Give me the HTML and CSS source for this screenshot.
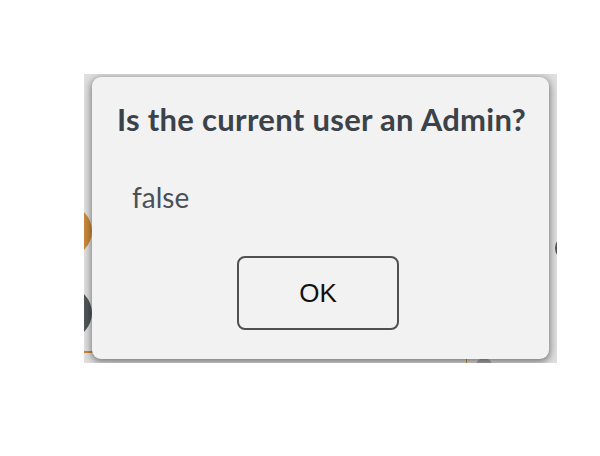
FILE: index.html
```html
<!DOCTYPE html>
<html>
<head>
<meta charset="utf-8">
<link rel="stylesheet" href="styles.css">
</head>
<body>
<div class="stage">
  <div class="backdrop">
    <span class="blob blob-orange"></span>
    <span class="blob blob-dark"></span>
    <span class="blob blob-right"></span>
    <span class="rule-orange"></span>
    <span class="stick"></span>
    <span class="blob blob-bottom"></span>
    <div class="dialog">
      <h1 class="title">Is the current user an Admin?</h1>
      <p class="message">false</p>
      <div class="actions">
        <button class="ok">OK</button>
      </div>
    </div>
  </div>
</div>
</body>
</html>
```

FILE: styles.css
```css
html, body {
  margin: 0;
  padding: 0;
  background: #ffffff;
}
.stage {
  width: 600px;
  height: 456px;
  padding: 74px 0 0 84px;
  box-sizing: border-box;
}
.backdrop {
  position: relative;
  width: 473px;
  height: 289px;
  background: #dedede;
  overflow: hidden;
  padding: 3px 0 0 8px;
  box-sizing: border-box;
}
.blob {
  position: absolute;
  border-radius: 50%;
}
.blob-orange {
  left: -40px;
  top: 132px;
  width: 48px;
  height: 50px;
  background: #c8883a;
}
.blob-dark {
  left: -40px;
  top: 214px;
  width: 48px;
  height: 50px;
  background: #4f5457;
}
.blob-right {
  left: 471px;
  top: 162px;
  width: 24px;
  height: 24px;
  background: #4f5457;
}
.rule-orange {
  position: absolute;
  left: 0;
  top: 277px;
  width: 20px;
  height: 2px;
  background: #c8883a;
}
.stick {
  position: absolute;
  left: 382px;
  top: 284px;
  width: 1px;
  height: 6px;
  background: #c8883a;
}
.blob-bottom {
  left: 392px;
  top: 284px;
  width: 16px;
  height: 16px;
  background: #a8a8a8;
}
.dialog {
  position: relative;
  width: 457px;
  height: 282px;
  background: #f2f2f2;
  border-radius: 9px;
  box-shadow: 0 2px 7px 1px rgba(0, 0, 0, 0.45);
  display: flex;
  flex-direction: column;
  box-sizing: border-box;
  padding: 24px 0 0 0;
}
.title {
  margin: 0;
  padding-left: 2px;
  text-align: center;
  font-family: Lato, "Noto Sans", sans-serif;
  font-weight: 700;
  font-size: 31px;
  letter-spacing: 0.3px;
  line-height: 36px;
  color: #3b4249;
}
.message {
  margin: 45px 0 0 40px;
  font-family: Lato, "Noto Sans", sans-serif;
  font-weight: 400;
  font-size: 28px;
  line-height: 30px;
  color: #4a5057;
}
.actions {
  display: flex;
  justify-content: center;
  margin-top: 44px;
  padding-right: 5px;
  flex-shrink: 0;
}
.ok {
  width: 162px;
  height: 74px;
  background: #f2f2f2;
  border: 2px solid #505050;
  border-radius: 8px;
  font-family: "Liberation Sans", Arial, sans-serif;
  font-size: 26px;
  color: #111111;
  padding: 0;
}
```
